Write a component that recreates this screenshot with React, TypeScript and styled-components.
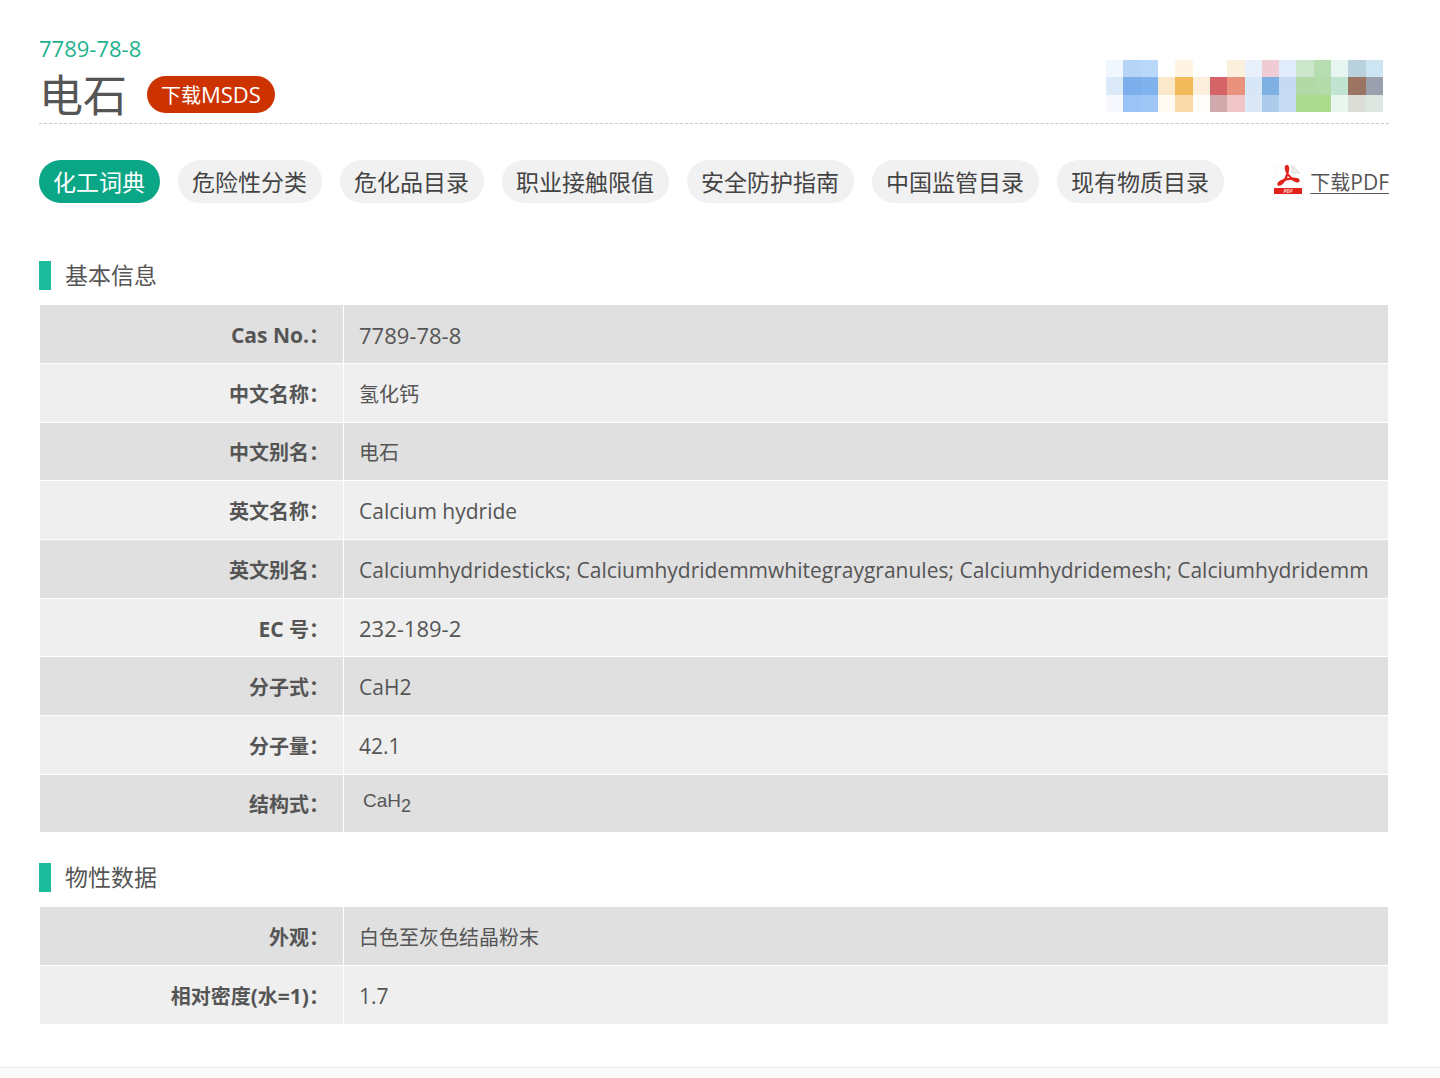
import React from "react";
import styled, { createGlobalStyle } from "styled-components";

const GlobalStyle = createGlobalStyle`
  body {
    margin: 0;
    background: #fff;
    color: #555;
    font-family: "Open Sans", "Noto Sans CJK SC", sans-serif;
    font-size: 20px;
    line-height: 28px;
  }
  * { box-sizing: border-box; }
`;

const Page = styled.main`
  padding: 34px 51px 42px 39px;
`;

const Header = styled.header`
  display: flex;
  justify-content: space-between;
  align-items: flex-end;
  border-bottom: 1px dashed #c4cac8;
`;

const Latin = styled.span<{ $large?: boolean }>`
  font-size: ${(p) => (p.$large ? 22 : 21)}px;
`;

const CasNumber = styled.div`
  color: #1fb28e;
  font-size: 22px;
  line-height: 28px;
`;

const TitleRow = styled.div`
  display: flex;
  align-items: center;
  gap: 20px;
  height: 61px;
`;

const Title = styled.h1`
  margin: 0;
  font-size: 44px;
  line-height: 58px;
  font-weight: 400;
  font-family: "Noto Sans CJK SC", sans-serif;
`;

const MsdsButton = styled.button`
  height: 37px;
  margin-top: 4px;
  padding: 0 14px;
  border: 0;
  border-radius: 19px;
  background: #cc3300;
  color: #fff;
  font: inherit;
  line-height: 36px;
  cursor: pointer;
`;

const Logo = styled.svg`
  width: 277px;
  height: 52px;
  margin: 0 6px 11px 0;
`;

const Toolbar = styled.div`
  display: flex;
  justify-content: space-between;
  align-items: center;
  margin-top: 36px;
`;

const Tabs = styled.nav`
  display: flex;
  flex-wrap: wrap;
  gap: 18px;
`;

const Tab = styled.button<{ $active?: boolean }>`
  height: 43px;
  padding: 2px 15px 0 14px;
  border: 0;
  border-radius: 22px;
  background: ${(p) => (p.$active ? "#0ba686" : "#f1f1f1")};
  color: ${(p) => (p.$active ? "#fff" : "#444")};
  font: inherit;
  font-size: 23px;
  line-height: 41px;
  cursor: pointer;
`;

const PdfLink = styled.a`
  display: flex;
  align-items: center;
  gap: 7px;
  color: #555;
  text-decoration: none;
`;

const PdfLabel = styled.span`
  padding-top: 2px;
  text-decoration: underline;
  text-decoration-thickness: 1px;
  text-underline-offset: 3px;
`;

const Section = styled.section<{ $gap: number }>`
  margin-top: ${(p) => p.$gap}px;
`;

const SectionTitle = styled.h2`
  margin: 0 0 14px;
  padding-left: 14px;
  border-left: 12px solid #1abc9c;
  font-size: 23px;
  line-height: 29px;
  font-weight: 400;
`;

const Table = styled.table`
  width: 100%;
  border-collapse: separate;
  border-spacing: 1px;
`;

const Row = styled.tr`
  height: 58px;
  background: #efefef;
  &:nth-child(odd) {
    background: #e0e0e0;
  }
  &:nth-child(3n) {
    height: 57px;
  }
`;

const Label = styled.th`
  width: 303px;
  padding: 3px 14px 0 0;
  text-align: right;
  font-weight: 700;
`;

const Value = styled.td`
  padding: 3px 15px 0;
`;

const Formula = styled.span`
  display: block;
  padding: 0 4px 8px;
  font-family: "Liberation Sans", Arial, sans-serif;
  font-size: 19px;
  line-height: 22px;
  sub {
    font-size: 18px;
    line-height: 0;
  }
`;

const Footer = styled.footer`
  height: 11px;
  border-top: 1px solid #e8e8e8;
  background: #fafafa;
`;

const mosaic = [
  ["#f0f7fe", "#b5d4f6", "#b9d7f8", "#ffffff", "#fff4e4", "#ffffff", "#ffffff", "#faf0dc", "#e8f1fb", "#efccd4", "#e0ecfb", "#cbe6ca", "#b7deb0", "#e6f5f0", "#b8d1dc", "#cde5f2"],
  ["#dbe9f8", "#7caeec", "#80b2ee", "#fbe8ca", "#f0ba58", "#fcefde", "#d46468", "#e9937f", "#d8e7f7", "#7fb0e3", "#c6daf3", "#b2d9a5", "#b3dba9", "#c1e4d2", "#9b7464", "#9aa0ad"],
  ["#f6f8fe", "#9bc3f5", "#9fc6f5", "#fffaf2", "#f8d9a7", "#fffdfa", "#cfa9ac", "#f0c5c8", "#dbe8f8", "#adcbeb", "#c9dcf5", "#a9da8d", "#abdb8d", "#e8f6ee", "#dcddd7", "#dde6e0"],
];

const basic: [string, string][] = [
  ["Cas No.", "7789-78-8"],
  ["中文名称", "氢化钙"],
  ["中文别名", "电石"],
  ["英文名称", "Calcium hydride"],
  ["英文别名", "Calciumhydridesticks; Calciumhydridemmwhitegraygranules; Calciumhydridemesh; Calciumhydridemm"],
  ["EC 号", "232-189-2"],
  ["分子式", "CaH2"],
  ["分子量", "42.1"],
  ["结构式", "formula"],
];

const physical: [string, string][] = [
  ["外观", "白色至灰色结晶粉末"],
  ["相对密度(水=1)", "1.7"],
];

const tabs = ["化工词典", "危险性分类", "危化品目录", "职业接触限值", "安全防护指南", "中国监管目录", "现有物质目录"];

function MixedText({ text, large }: { text: string; large?: boolean }) {
  return (
    <>
      {text.split(/([\x20-\x7e]+)/).map((part, i) =>
        i % 2 ? <Latin key={i} $large={large}>{part}</Latin> : part
      )}
    </>
  );
}

function DataTable({ rows }: { rows: [string, string][] }) {
  return (
    <Table>
      <tbody>
        {rows.map(([label, value]) => (
          <Row key={label}>
            <Label scope="row"><MixedText text={`${label}：`} /></Label>
            <Value>
              {value === "formula" ? (
                <Formula>CaH<sub>2</sub></Formula>
              ) : (
                <MixedText text={value} large={/^[\d-]+$/.test(value)} />
              )}
            </Value>
          </Row>
        ))}
      </tbody>
    </Table>
  );
}

function PdfIcon() {
  return (
    <svg width="30" height="34" viewBox="0 0 30 34" aria-hidden="true">
      <path d="M2 0H19L27 8V30H2Z" fill="#fdfdfd" stroke="#f3f3f3" strokeWidth=".6" />
      <path d="M19 0V8H27Z" fill="#ececec" stroke="#d5d5d5" strokeWidth=".6" />
      <path
        d="M13.500 1C16 .5 15.500 7 13 12.500C11 17 7.500 20.500 5.500 19.500C4.500 17.500 9.500 15.200 14.500 14.200C20 13 26 13.800 25.500 15.800C24.500 18 18.500 14.500 15.500 10C13 6 12 1.500 13.500 1Z"
        fill="none"
        stroke="#e3211c"
        strokeWidth="2.200"
      />
      <rect x="1" y="23" width="28" height="6" rx=".5" fill="#e3211c" />
      <text x="15" y="28" textAnchor="middle" fontSize="5" fontWeight="700" fontStyle="italic" fill="#ffd9d6">PDF</text>
    </svg>
  );
}

export default function App() {
  return (
    <>
      <GlobalStyle />
      <Page>
        <Header>
          <div>
            <CasNumber>7789-78-8</CasNumber>
            <TitleRow>
              <Title>电石</Title>
              <MsdsButton type="button"><MixedText text="下载MSDS" large /></MsdsButton>
            </TitleRow>
          </div>
          <Logo viewBox="0 0 16 3" preserveAspectRatio="none" shapeRendering="crispEdges" aria-hidden="true">
            {mosaic.map((line, y) =>
              line.map((color, x) => <rect key={`${x}-${y}`} x={x} y={y} width="1" height="1" fill={color} />)
            )}
          </Logo>
        </Header>
        <Toolbar>
          <Tabs>
            {tabs.map((name, i) => (
              <Tab key={name} type="button" $active={i === 0}>{name}</Tab>
            ))}
          </Tabs>
          <PdfLink href="#pdf">
            <PdfIcon />
            <PdfLabel><MixedText text="下载PDF" /></PdfLabel>
          </PdfLink>
        </Toolbar>
        <Section $gap={58}>
          <SectionTitle>基本信息</SectionTitle>
          <DataTable rows={basic} />
        </Section>
        <Section $gap={30}>
          <SectionTitle>物性数据</SectionTitle>
          <DataTable rows={physical} />
        </Section>
      </Page>
      <Footer />
    </>
  );
}
